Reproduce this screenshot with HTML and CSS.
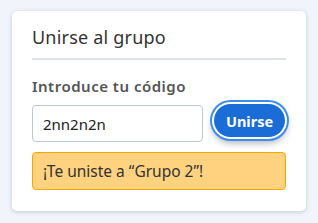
FILE: index.html
```html
<!DOCTYPE html>
<html lang="es">
<head>
<meta charset="utf-8">
<title>Unirse al grupo</title>
<link rel="stylesheet" href="styles.css">
</head>
<body>
<div class="card">
  <h2 class="title">Unirse al grupo</h2>
  <label class="label" for="code">Introduce tu código</label>
  <div class="row">
    <input id="code" class="input" type="text" value="2nn2n2n">
    <button class="btn" type="button">Unirse</button>
  </div>
  <div class="alert">¡Te uniste a “Grupo 2”!</div>
</div>
</body>
</html>
```

FILE: styles.css
```css
* { box-sizing: border-box; }
html, body { margin: 0; padding: 0; }
body {
  background: #f1f4fb;
  font-family: "Noto Sans", sans-serif;
  color: #333;
  padding: 11px 12px 12px 12px;
}
.card {
  width: 294px;
  height: 200px;
  background: #fff;
  border-radius: 5px;
  box-shadow: 0 1px 4px rgba(60, 70, 100, 0.25);
  padding: 14px 20px 20px 20px;
  display: flex;
  flex-direction: column;
}
.title {
  margin: 0;
  font-size: 18px;
  font-weight: 400;
  line-height: 24px;
  letter-spacing: 0.2px;
  color: #333;
  padding-bottom: 9px;
  border-bottom: 2px solid #dde1e9;
}
.label {
  margin-top: 16px;
  font-size: 15px;
  font-weight: 600;
  line-height: 20px;
  letter-spacing: 0.5px;
  color: #555;
}
.row {
  display: flex;
  align-items: flex-start;
  margin-top: 9px;
}
.input {
  flex: 0 0 171px;
  width: 171px;
  height: 37px;
  border: 1px solid #b9c6da;
  border-radius: 4px;
  padding: 0 10px;
  font-family: inherit;
  font-size: 15px;
  color: #222;
  outline: none;
}
.btn {
  flex: 0 0 71px;
  width: 71px;
  height: 33px;
  margin: -1px 0 0 11px;
  padding: 0;
  border: none;
  border-radius: 999px;
  background: #1a6dd6;
  color: #fff;
  font-family: inherit;
  font-size: 14.5px;
  font-weight: 700;
  box-shadow: 0 0 0 2px #fff, 0 0 0 4px #3a8cf3, 0 4px 7px 2px rgba(0, 0, 0, 0.3);
}
.alert {
  margin-top: 10px;
  height: 38px;
  background: #ffd27f;
  border: 1px solid #f5a700;
  border-radius: 4px;
  padding: 0 10px;
  display: flex;
  align-items: center;
  font-size: 15.5px;
  color: #333;
}
```
